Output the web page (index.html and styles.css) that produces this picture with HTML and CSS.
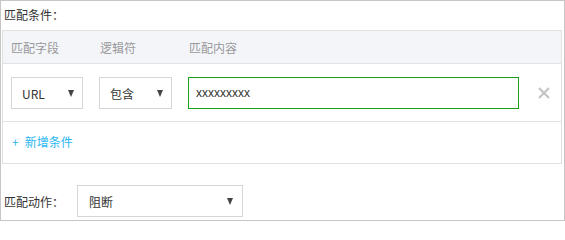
FILE: index.html
```html
<!DOCTYPE html>
<html lang="zh">
<head>
<meta charset="utf-8">
<link rel="stylesheet" href="styles.css">
</head>
<body>
<div class="panel">
  <div class="label-top">匹配条件：</div>
  <div class="cond-box">
    <div class="cond-head">
      <span class="col col-field">匹配字段</span>
      <span class="col col-op">逻辑符</span>
      <span class="col col-val">匹配内容</span>
    </div>
    <div class="cond-row">
      <div class="select sel-field"><span>URL</span><i class="caret"></i></div>
      <div class="select sel-op"><span>包含</span><i class="caret"></i></div>
      <div class="input">xxxxxxxxx</div>
      <svg class="remove" width="12" height="12" viewBox="0 0 12 12"><path d="M1 1L11 11M11 1L1 11" stroke="#c4c4c4" stroke-width="2.2"/></svg>
    </div>
    <div class="cond-add"><span class="plus">+</span>新增条件</div>
  </div>
  <div class="action-row">
    <span class="action-label">匹配动作：</span>
    <div class="select sel-action"><span>阻断</span><i class="caret"></i></div>
  </div>
</div>
</body>
</html>
```
FILE: styles.css
```css
* { box-sizing: border-box; }
html, body { margin: 0; padding: 0; background: #fff; }
body {
  font-family: "Noto Sans CJK SC", "Noto Sans", sans-serif;
  font-size: 12px;
  color: #333;
}
.panel {
  width: 565px;
  height: 221px;
  border: 1px solid #c6c6c6;
  padding: 0 2px 0 1px;
}
.label-top {
  height: 29px;
  line-height: 28px;
  padding-left: 2px;
  color: #333;
}
.cond-box {
  border: 1px solid #e1e1e1;
}
.cond-head {
  display: flex;
  align-items: center;
  height: 33px;
  background: #f4f5f9;
  border-bottom: 1px solid #dfe3e8;
  color: #999;
}
.col { display: block; }
.col-field { width: 97px; padding-left: 8px; }
.col-op { width: 89px; }
.cond-row {
  display: flex;
  align-items: center;
  padding: 13px 0 12px 8px;
  border-bottom: 1px solid #e1e1e1;
}
.select {
  display: flex;
  align-items: center;
  justify-content: space-between;
  height: 32px;
  border: 1px solid #d6d6d6;
  background: #fff;
  padding: 0 8px 0 10px;
  color: #333;
}
.caret {
  width: 0; height: 0;
  border-left: 3.5px solid transparent;
  border-right: 3.5px solid transparent;
  border-top: 7px solid #444;
}
.sel-field { width: 72px; margin-right: 16px; }
.sel-op { width: 73px; margin-right: 16px; }
.input {
  width: 331px;
  height: 32px;
  border: 1px solid #1ca01c;
  line-height: 30px;
  padding-left: 7px;
  font-family: "Liberation Sans", sans-serif;
  font-size: 12px;
  color: #333;
}
.remove { margin-left: 19px; }
.cond-add {
  height: 41px;
  line-height: 40px;
  padding-left: 9px;
  color: #2db7f5;
  font-size: 12px;
}
.plus { margin-right: 6px; }
.action-row {
  display: flex;
  align-items: center;
  margin-top: 21px;
}
.action-label {
  width: 75px;
  padding-left: 2px;
}
.sel-action { width: 166px; padding-left: 11px; padding-right: 9px; }
```
